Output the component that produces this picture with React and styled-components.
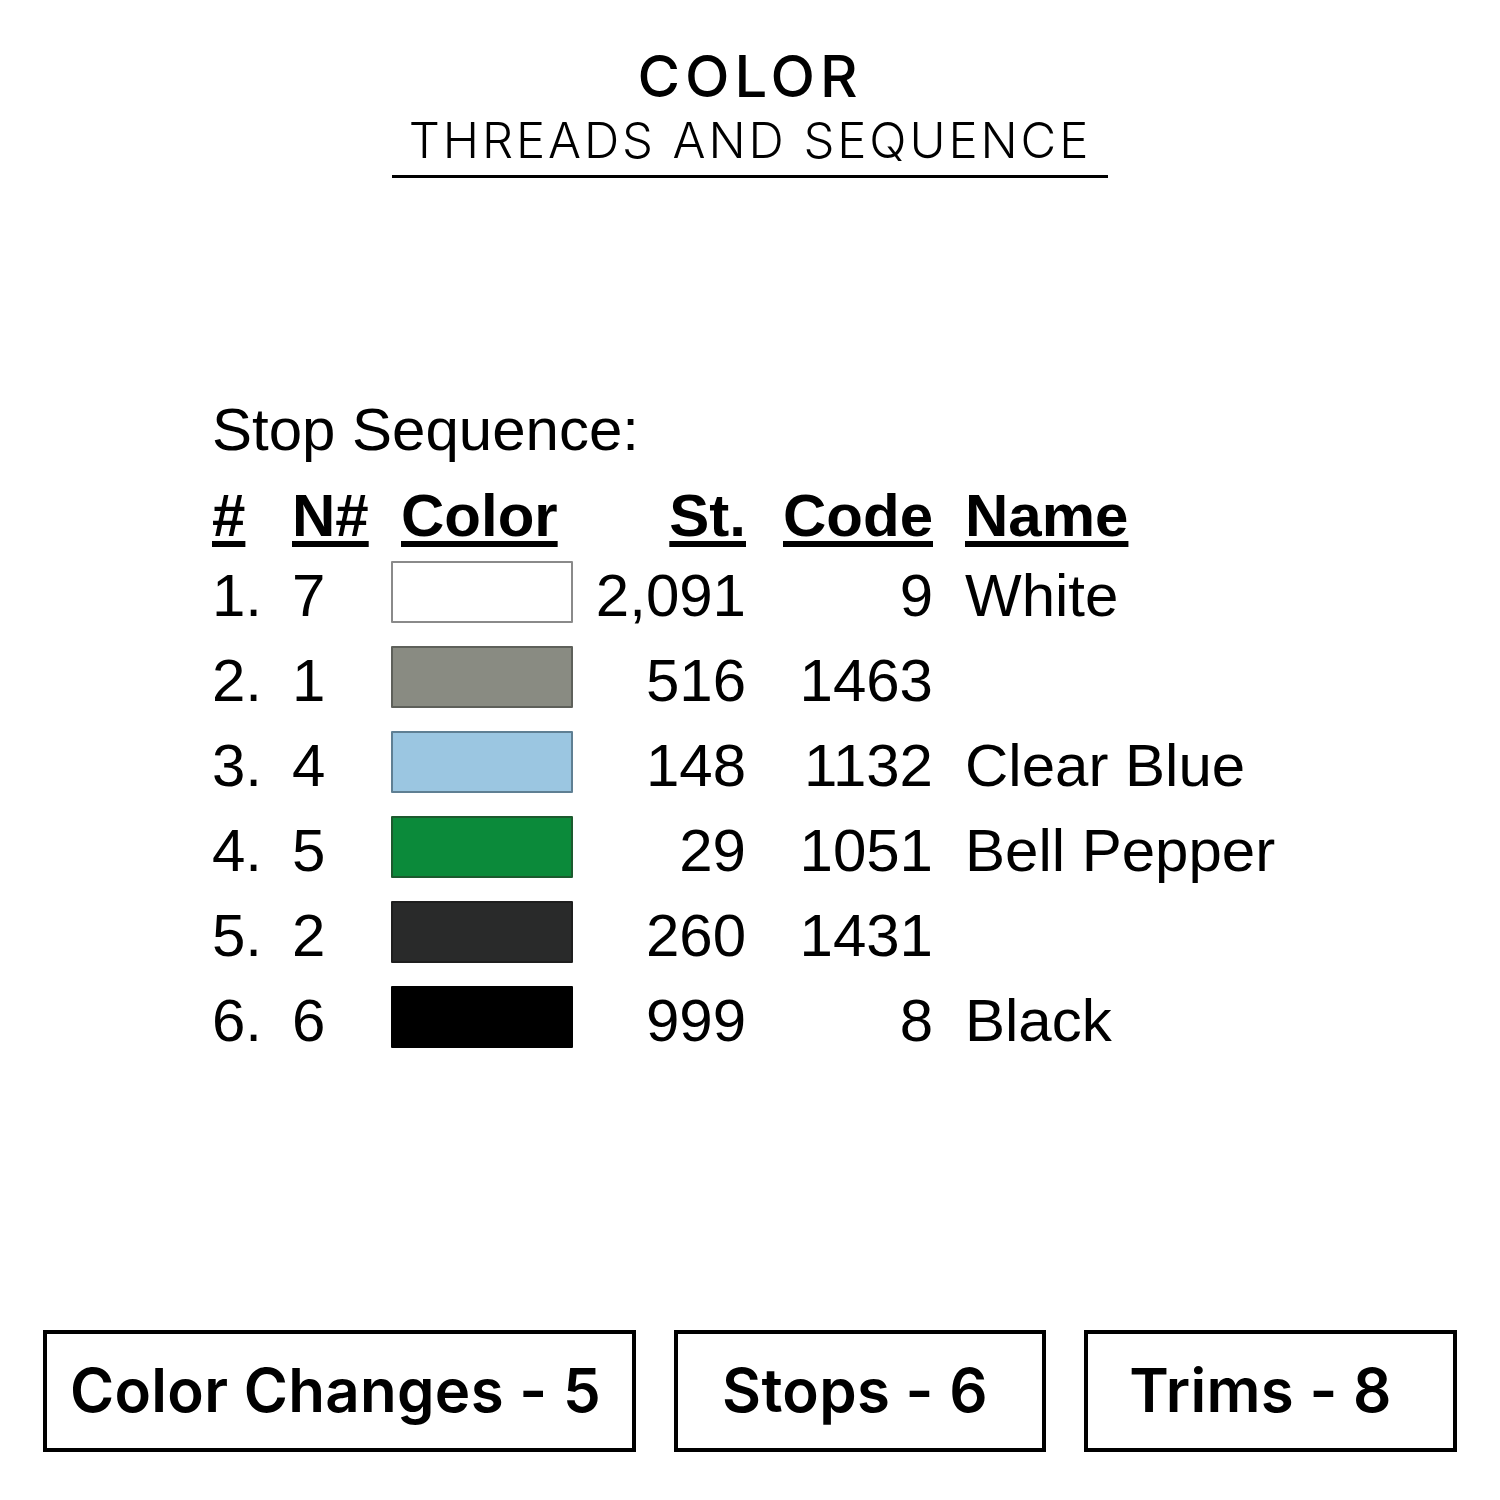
import React from "react";
import styled, { createGlobalStyle } from "styled-components";

const Global = createGlobalStyle`
  html, body { margin: 0; padding: 0; background: #fff; }
  #root { width: 1500px; height: 1500px; }
`;

const Page = styled.div`
  width: 1500px;
  height: 1500px;
  background: #fff;
  display: flex;
  flex-direction: column;
  color: #000;
`;

const Header = styled.header`
  display: flex;
  flex-direction: column;
  align-items: center;
  padding-top: 47px;
`;

const Title = styled.h1`
  margin: 0;
  font-family: Inter, "Liberation Sans", sans-serif;
  font-weight: 500;
  font-size: 58px;
  line-height: 58px;
  letter-spacing: 5px;
`;

const Subtitle = styled.h2`
  margin: 11px 0 0;
  font-family: Inter, "Liberation Sans", sans-serif;
  font-weight: 300;
  font-size: 49px;
  line-height: 49px;
  letter-spacing: 2.9px;
`;

const Rule = styled.div`
  width: 716px;
  height: 3px;
  background: #000;
  margin-top: 10px;
`;

const Sequence = styled.section`
  margin-top: 217px;
  padding-left: 212px;
  font-family: "Liberation Sans", Arial, sans-serif;
  font-size: 60px;
`;

const SeqTitle = styled.div`
  line-height: 70px;
  height: 70px;
  margin-bottom: 8px;
`;

const Table = styled.div`
  display: grid;
  grid-template-columns: 80px 99px 182px 173px 187px auto;
  grid-template-rows: 80px;
  grid-auto-rows: 85px;
  line-height: 85px;
`;

const HeadCell = styled.div`
  font-weight: 700;
  text-align: ${(p) => (p.$right ? "right" : "left")};
  padding-left: ${(p) => p.$pl || 0}px;
  height: 80px;
  white-space: nowrap;
  span {
    text-decoration: underline;
    text-decoration-thickness: 6px;
    text-underline-offset: 5px;
  }
`;

const Cell = styled.div`
  text-align: ${(p) => (p.$right ? "right" : "left")};
  padding-left: ${(p) => p.$pl || 0}px;
  white-space: nowrap;
`;

const SwatchCell = styled.div`
  display: flex;
  align-items: flex-start;
`;

const Swatch = styled.div`
  width: 182px;
  height: 62px;
  margin-top: 8px;
  box-sizing: border-box;
  background: ${(p) => p.$color};
  border: 2px solid ${(p) => p.$border};
  border-radius: 1px;
`;

const Footer = styled.footer`
  margin-top: auto;
  margin-bottom: 48px;
  padding: 0 43px;
  display: flex;
  justify-content: space-between;
`;

const StatBox = styled.div`
  width: ${(p) => p.$w}px;
  height: 122px;
  box-sizing: border-box;
  border: 4px solid #000;
  display: flex;
  align-items: center;
  justify-content: center;
  font-family: Inter, "Liberation Sans", sans-serif;
  font-weight: 600;
  font-size: 60px;
  letter-spacing: 0.3px;
  padding-bottom: 2px;
  padding-right: ${(p) => p.$pr || 0}px;
`;

const rows = [
  { n: "1.", nn: "7", color: "#ffffff", border: "#8a8a8a", st: "2,091", code: "9", name: "White" },
  { n: "2.", nn: "1", color: "#898b82", border: "#5e605a", st: "516", code: "1463", name: "" },
  { n: "3.", nn: "4", color: "#9bc6e1", border: "#5f7f93", st: "148", code: "1132", name: "Clear Blue" },
  { n: "4.", nn: "5", color: "#0b8a3a", border: "#1c5a2e", st: "29", code: "1051", name: "Bell Pepper" },
  { n: "5.", nn: "2", color: "#292a2a", border: "#1e1e1e", st: "260", code: "1431", name: "" },
  { n: "6.", nn: "6", color: "#000000", border: "#000000", st: "999", code: "8", name: "Black" },
];

export default function App() {
  return (
    <Page>
      <Global />
      <Header>
        <Title>COLOR</Title>
        <Subtitle>THREADS AND SEQUENCE</Subtitle>
        <Rule />
      </Header>
      <Sequence>
        <SeqTitle>Stop Sequence:</SeqTitle>
        <Table>
          <HeadCell><span>#</span></HeadCell>
          <HeadCell><span>N#</span></HeadCell>
          <HeadCell $pl={10}><span>Color</span></HeadCell>
          <HeadCell $right><span>St.</span></HeadCell>
          <HeadCell $right><span>Code</span></HeadCell>
          <HeadCell $pl={32}><span>Name</span></HeadCell>
          {rows.map((r) => (
            <React.Fragment key={r.n}>
              <Cell>{r.n}</Cell>
              <Cell>{r.nn}</Cell>
              <SwatchCell>
                <Swatch $color={r.color} $border={r.border} />
              </SwatchCell>
              <Cell $right>{r.st}</Cell>
              <Cell $right>{r.code}</Cell>
              <Cell $pl={32}>{r.name}</Cell>
            </React.Fragment>
          ))}
        </Table>
      </Sequence>
      <Footer>
        <StatBox $w={593} $pr={8}>Color Changes - 5</StatBox>
        <StatBox $w={372} $pr={10}>Stops - 6</StatBox>
        <StatBox $w={373} $pr={20}>Trims - 8</StatBox>
      </Footer>
    </Page>
  );
}
